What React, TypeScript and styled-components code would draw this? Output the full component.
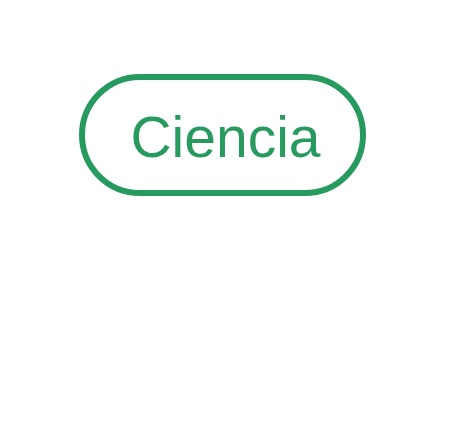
import React from "react";
import styled, { createGlobalStyle } from "styled-components";

const Global = createGlobalStyle`
  html, body { margin: 0; padding: 0; background: #ffffff; }
  body { font-family: "Liberation Sans", Arial, sans-serif; }
`;

const Page = styled.div`
  padding: 74px 0 0 79px;
`;

const Pill = styled.span`
  display: inline-flex;
  align-items: center;
  justify-content: center;
  box-sizing: border-box;
  width: 287px;
  height: 122px;
  border: 6px solid #279a5f;
  border-radius: 61px;
  color: #279a5f;
  font-family: "Liberation Sans", Arial, sans-serif;
  font-size: 57px;
  line-height: 1;
  padding: 4px 0 0 6px;
`;

export default function App() {
  return (
    <>
      <Global />
      <Page>
        <Pill>Ciencia</Pill>
      </Page>
    </>
  );
}
